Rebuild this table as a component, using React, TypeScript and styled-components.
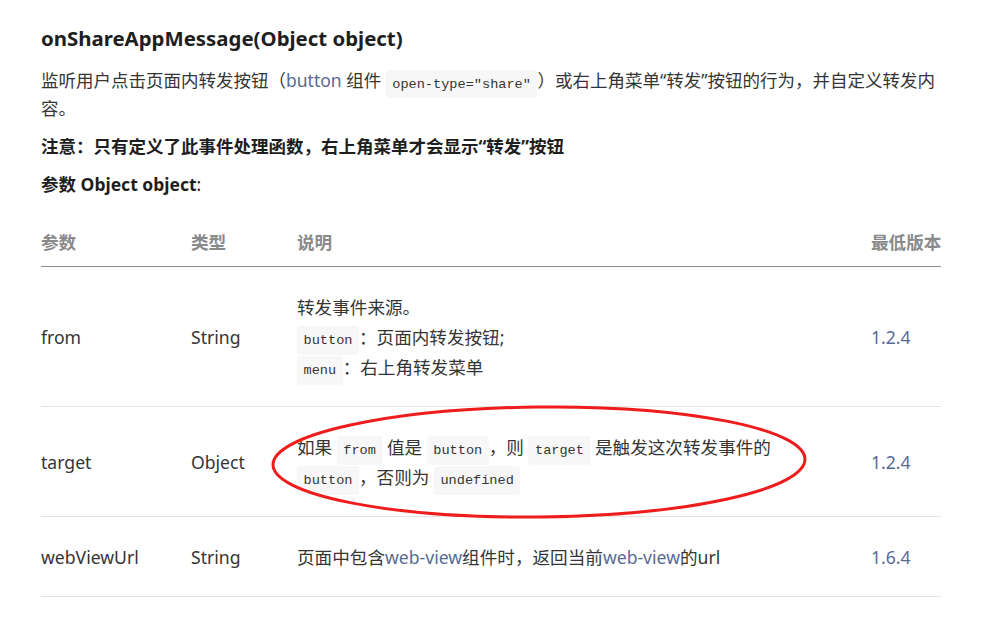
import React from "react";
import styled, { createGlobalStyle } from "styled-components";

const GlobalStyle = createGlobalStyle`
  html, body { margin: 0; padding: 0; background: #ffffff; }
  body {
    font-family: "Noto Sans", "Noto Sans CJK SC", sans-serif;
    color: #353535;
    font-size: 17.6px;
  }
`;

const Page = styled.div`
  width: 900px;
  padding: 23px 49px 0 41px;
`;

const Title = styled.h3`
  margin: 0 0 13px;
  font-size: 20.4px;
  line-height: 30px;
  font-weight: 700;
  color: #1e1e1e;
`;

const Para = styled.p<{ $bold?: boolean }>`
  margin: 0 0 10px;
  font-size: 17.5px;
  line-height: 28px;
  font-weight: ${(p) => (p.$bold ? 700 : 400)};
  color: ${(p) => (p.$bold ? "#1e1e1e" : "#353535")};
`;

const Light = styled.span`
  font-weight: 400;
`;

const Link = styled.span`
  color: #576b95;
`;

const Code = styled.code`
  font-family: "Liberation Mono", "DejaVu Sans Mono", monospace;
  font-size: 13.6px;
  line-height: 1;
  background: #f7f7f7;
  color: #353535;
  padding: 6.5px 6.5px;
  border-radius: 3px;
`;

const Table = styled.table`
  width: 900px;
  margin-top: 14px;
  border-collapse: collapse;
  table-layout: fixed;
`;

const Th = styled.th<{ $w?: number }>`
  width: ${(p) => (p.$w ? `${p.$w}px` : "auto")};
  text-align: left;
  color: #8a8a8a;
  font-weight: 700;
  font-size: 17.6px;
  line-height: 30px;
  padding: 15px 0 9px;
  border-bottom: 1px solid #8c8c8c;
  white-space: nowrap;
`;

const Tr = styled.tr`
  border-bottom: 1px solid #e5e5e5;
`;

const Td = styled.td<{ $version?: boolean }>`
  text-align: left;
  color: ${(p) => (p.$version ? "#576b95" : "#353535")};
  font-size: 17.6px;
  line-height: 30px;
  padding: 25px 0 24px;
  vertical-align: middle;

  ${Code} {
    padding: 7px 6.5px;
  }
`;

const DescCell = styled(Td)`
  position: relative;
`;

const Ellipse = styled.svg`
  position: absolute;
  left: -28px;
  top: -3px;
  width: 540px;
  height: 116px;
  overflow: visible;
  pointer-events: none;
`;

export default function App() {
  return (
    <>
      <GlobalStyle />
      <Page>
        <Title>onShareAppMessage(Object object)</Title>
        <Para>
          {"监听用户点击页面内转发按钮（"}
          <Link>button</Link> 组件 <Code>open-type="share"</Code>
          {"）或右上角菜单“转发”按钮的行为，并自定义转发内"}
          {"容。"}
        </Para>
        <Para $bold>注意：只有定义了此事件处理函数，右上角菜单才会显示“转发”按钮</Para>
        <Para $bold>
          参数 Object object<Light>:</Light>
        </Para>
        <Table>
          <thead>
            <tr>
              <Th $w={150}>参数</Th>
              <Th $w={106}>类型</Th>
              <Th>说明</Th>
              <Th $w={70}>最低版本</Th>
            </tr>
          </thead>
          <tbody>
            <Tr>
              <Td>from</Td>
              <Td>String</Td>
              <Td>
                转发事件来源。
                <br />
                <Code>button</Code>：页面内转发按钮;
                <br />
                <Code>menu</Code>：右上角转发菜单
              </Td>
              <Td $version>1.2.4</Td>
            </Tr>
            <Tr>
              <Td>target</Td>
              <Td>Object</Td>
              <DescCell>
                如果 <Code>from</Code> 值是 <Code>button</Code>，则 <Code>target</Code> 是触发这次转发事件的
                <br />
                <Code>button</Code>，否则为 <Code>undefined</Code>
                <Ellipse viewBox="0 0 540 116">
                  <ellipse
                    cx="270"
                    cy="58"
                    rx="266"
                    ry="55"
                    fill="none"
                    stroke="#ee1c1c"
                    strokeWidth="3"
                    transform="rotate(-0.6 270 58)"
                  />
                </Ellipse>
              </DescCell>
              <Td $version>1.2.4</Td>
            </Tr>
            <Tr>
              <Td>webViewUrl</Td>
              <Td>String</Td>
              <Td>
                页面中包含<Link>web-view</Link>组件时，返回当前<Link>web-view</Link>的url
              </Td>
              <Td $version>1.6.4</Td>
            </Tr>
          </tbody>
        </Table>
      </Page>
    </>
  );
}
